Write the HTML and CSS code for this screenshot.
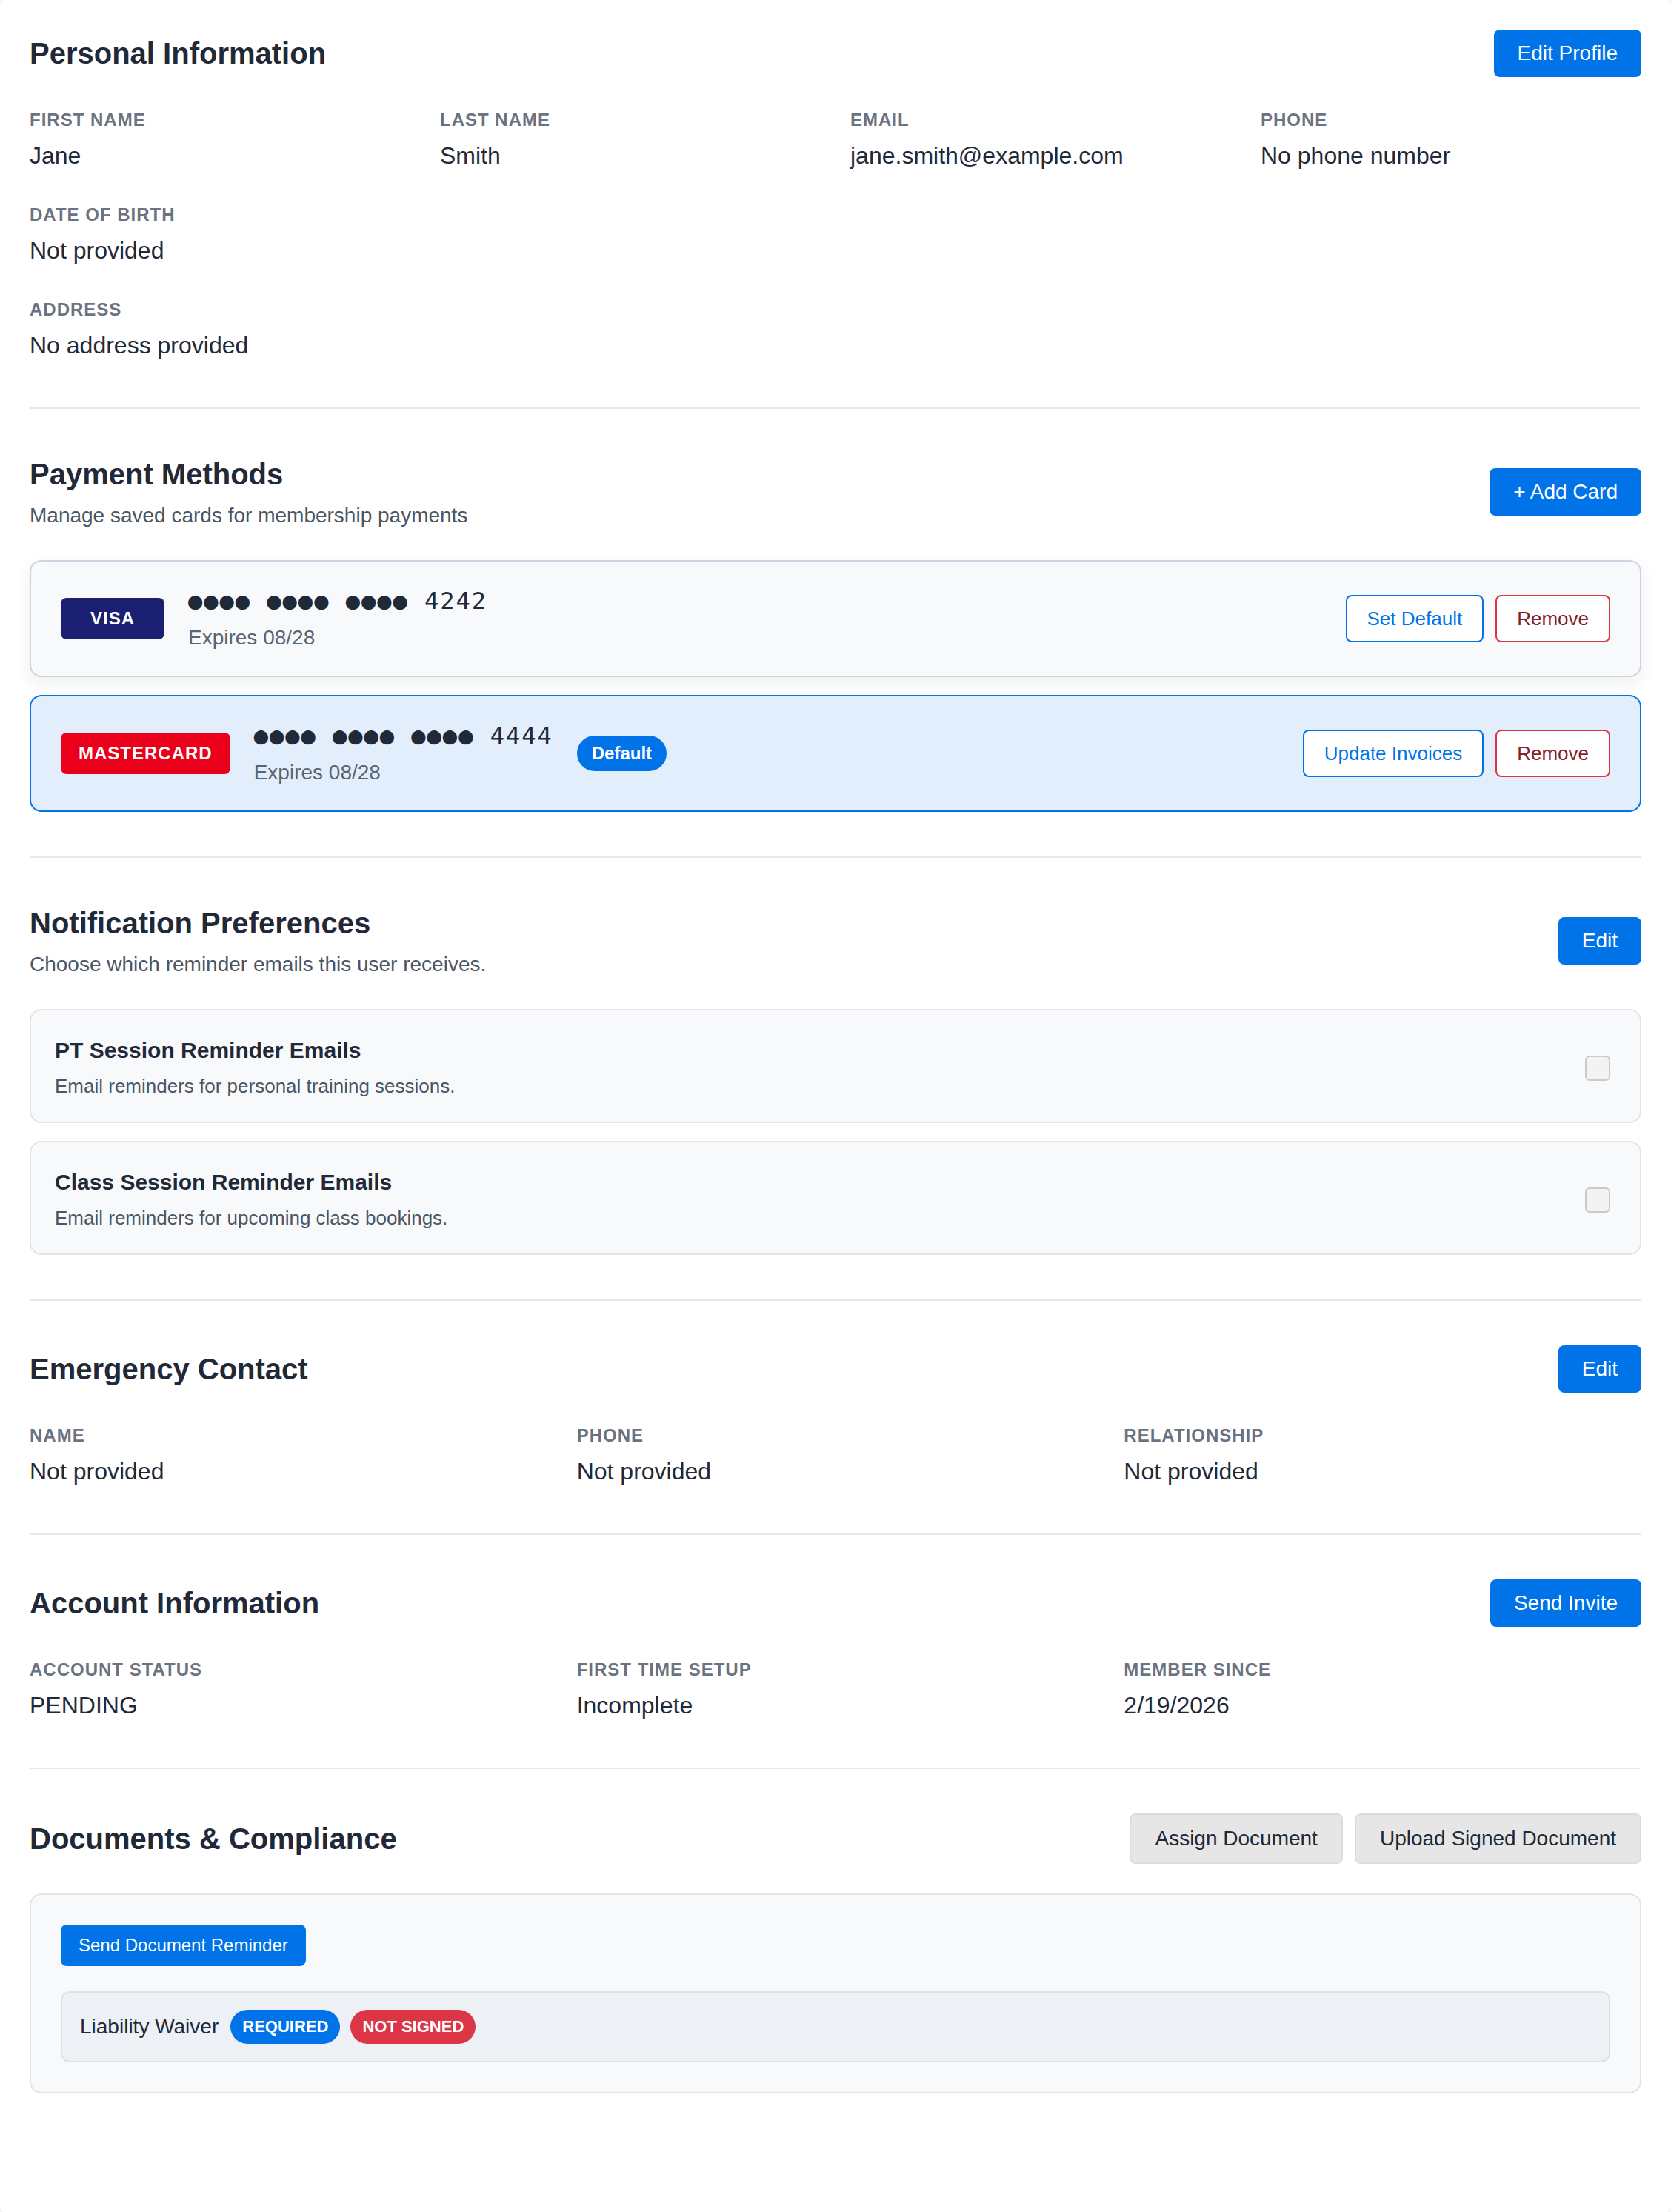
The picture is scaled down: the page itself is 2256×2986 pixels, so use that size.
FILE: index.html
```html
<!DOCTYPE html>
<html lang="en">
<head>
  <meta charset="UTF-8">
  <meta name="viewport" content="width=device-width, initial-scale=1.0">
  <title>Member Profile</title>
  <link rel="stylesheet" href="styles.css">
</head>
<body>
  <div class="profile">

    <section class="section">
      <div class="section-header">
        <h2>Personal Information</h2>
        <button class="btn btn-primary">Edit Profile</button>
      </div>
      <div class="fields fields-4">
        <div class="field">
          <div class="field-label">First Name</div>
          <div class="field-value">Jane</div>
        </div>
        <div class="field">
          <div class="field-label">Last Name</div>
          <div class="field-value">Smith</div>
        </div>
        <div class="field">
          <div class="field-label">Email</div>
          <div class="field-value">jane.smith@example.com</div>
        </div>
        <div class="field">
          <div class="field-label">Phone</div>
          <div class="field-value">No phone number</div>
        </div>
        <div class="field">
          <div class="field-label">Date of Birth</div>
          <div class="field-value">Not provided</div>
        </div>
        <div class="field field-wide">
          <div class="field-label">Address</div>
          <div class="field-value">No address provided</div>
        </div>
      </div>
    </section>

    <section class="section">
      <div class="section-header">
        <div>
          <h2>Payment Methods</h2>
          <p class="section-sub">Manage saved cards for membership payments</p>
        </div>
        <button class="btn btn-primary">+ Add Card</button>
      </div>
      <div class="card-list">
        <div class="pay-card pay-card-hover">
          <div class="pay-card-main">
            <span class="brand brand-visa">VISA</span>
            <div class="pay-card-info">
              <div class="card-number">●●●● ●●●● ●●●● 4242</div>
              <div class="card-expiry">Expires 08/28</div>
            </div>
          </div>
          <div class="pay-card-actions">
            <button class="btn-outline btn-outline-blue">Set Default</button>
            <button class="btn-outline btn-outline-red">Remove</button>
          </div>
        </div>
        <div class="pay-card pay-card-default">
          <div class="pay-card-main">
            <span class="brand brand-mc">MASTERCARD</span>
            <div class="pay-card-info">
              <div class="card-number">●●●● ●●●● ●●●● 4444</div>
              <div class="card-expiry">Expires 08/28</div>
            </div>
            <span class="pill">Default</span>
          </div>
          <div class="pay-card-actions">
            <button class="btn-outline btn-outline-blue">Update Invoices</button>
            <button class="btn-outline btn-outline-red">Remove</button>
          </div>
        </div>
      </div>
    </section>

    <section class="section">
      <div class="section-header">
        <div>
          <h2>Notification Preferences</h2>
          <p class="section-sub">Choose which reminder emails this user receives.</p>
        </div>
        <button class="btn btn-primary">Edit</button>
      </div>
      <div class="pref-list">
        <label class="pref">
          <div>
            <div class="pref-title">PT Session Reminder Emails</div>
            <div class="pref-desc">Email reminders for personal training sessions.</div>
          </div>
          <input type="checkbox" class="pref-check" disabled>
        </label>
        <label class="pref">
          <div>
            <div class="pref-title">Class Session Reminder Emails</div>
            <div class="pref-desc">Email reminders for upcoming class bookings.</div>
          </div>
          <input type="checkbox" class="pref-check" disabled>
        </label>
      </div>
    </section>

    <section class="section">
      <div class="section-header">
        <h2>Emergency Contact</h2>
        <button class="btn btn-primary">Edit</button>
      </div>
      <div class="fields fields-3">
        <div class="field">
          <div class="field-label">Name</div>
          <div class="field-value">Not provided</div>
        </div>
        <div class="field">
          <div class="field-label">Phone</div>
          <div class="field-value">Not provided</div>
        </div>
        <div class="field">
          <div class="field-label">Relationship</div>
          <div class="field-value">Not provided</div>
        </div>
      </div>
    </section>

    <section class="section">
      <div class="section-header">
        <h2>Account Information</h2>
        <button class="btn btn-primary">Send Invite</button>
      </div>
      <div class="fields fields-3">
        <div class="field">
          <div class="field-label">Account Status</div>
          <div class="field-value">PENDING</div>
        </div>
        <div class="field">
          <div class="field-label">First Time Setup</div>
          <div class="field-value">Incomplete</div>
        </div>
        <div class="field">
          <div class="field-label">Member Since</div>
          <div class="field-value">2/19/2026</div>
        </div>
      </div>
    </section>

    <section class="section">
      <div class="section-header">
        <h2>Documents &amp; Compliance</h2>
        <div class="header-actions">
          <button class="btn btn-light">Assign Document</button>
          <button class="btn btn-light">Upload Signed Document</button>
        </div>
      </div>
      <div class="doc-panel">
        <button class="btn-small">Send Document Reminder</button>
        <div class="doc-row">
          <span class="doc-name">Liability Waiver</span>
          <span class="tag tag-blue">REQUIRED</span>
          <span class="tag tag-red">NOT SIGNED</span>
        </div>
      </div>
    </section>

  </div>
</body>
</html>
```

FILE: styles.css
```css
* {
  box-sizing: border-box;
}

body {
  margin: 0;
  background: #f3f4f6;
  font-family: "Liberation Sans", Arial, Helvetica, sans-serif;
  color: #1f2937;
}

.profile {
  background: #fff;
  border-radius: 8px;
  padding: 40px;
  min-height: 100vh;
}

.section {
  padding: 60px 0;
  border-bottom: 2px solid #e5e7eb;
}

.section:first-child {
  padding-top: 0;
}

.section:last-child {
  border-bottom: none;
}

.section-header {
  display: flex;
  justify-content: space-between;
  align-items: center;
  margin-bottom: 40px;
}

h2 {
  margin: 0;
  font-size: 40px;
  line-height: 56px;
  font-weight: 700;
  color: #1f2937;
}

.section-sub {
  margin: 8px 0 0;
  font-size: 28px;
  line-height: 40px;
  color: #4b5563;
}

.header-actions {
  display: flex;
  gap: 16px;
}

/* buttons */
.btn {
  font-family: inherit;
  font-size: 28px;
  line-height: 32px;
  padding: 16px 32px;
  border-radius: 8px;
  border: none;
  cursor: pointer;
}

.btn-primary {
  background: #0073e8;
  color: #fff;
}

.btn-light {
  background: #e6e6e6;
  color: #1f2937;
  border: 2px solid #dcdcdc;
  padding: 16px 32px;
}

.btn-outline {
  font-family: inherit;
  font-size: 26px;
  line-height: 30px;
  padding: 15px 27px;
  background: #fff;
  border-radius: 8px;
  cursor: pointer;
}

.btn-outline-blue {
  border: 2px solid #0073e8;
  color: #0073e8;
}

.btn-outline-red {
  border: 2px solid #dc3545;
  color: #842029;
}

.btn-small {
  font-family: inherit;
  font-size: 24px;
  line-height: 28px;
  padding: 14px 24px;
  background: #0073e8;
  color: #fff;
  border: none;
  border-radius: 8px;
  cursor: pointer;
}

/* label / value grids */
.fields {
  display: grid;
  column-gap: 40px;
  row-gap: 42px;
  padding-top: 4px;
}

.fields-4 {
  grid-template-columns: repeat(4, 1fr);
}

.fields-3 {
  grid-template-columns: repeat(3, 1fr);
}

.field-wide {
  grid-column: 1 / -1;
}

.field-label {
  font-size: 24px;
  line-height: 28px;
  font-weight: 700;
  letter-spacing: 1px;
  text-transform: uppercase;
  color: #6b7280;
  margin-bottom: 10px;
}

.field-value {
  font-size: 32px;
  line-height: 48px;
  color: #1f2937;
}

/* payment cards */
.card-list {
  display: flex;
  flex-direction: column;
  gap: 24px;
}

.pay-card {
  display: flex;
  justify-content: space-between;
  align-items: center;
  padding: 33px 40px;
  border-radius: 16px;
  border: 2px solid #e5e7eb;
  background: #f8f9fa;
}

.pay-card-hover {
  border-color: #cbd5e1;
  box-shadow: 0 8px 24px rgba(15, 23, 42, 0.07);
}

.pay-card-default {
  background: #e3eefc;
  border-color: #0073e8;
}

.pay-card-main {
  display: flex;
  align-items: center;
  gap: 32px;
}

.brand {
  min-width: 140px;
  padding: 8px 24px;
  border-radius: 8px;
  color: #fff;
  font-size: 24px;
  line-height: 40px;
  font-weight: 700;
  letter-spacing: 1px;
  text-align: center;
}

.brand-visa {
  background: #1a1f71;
}

.brand-mc {
  background: #eb001b;
}

.card-number {
  font-family: "DejaVu Sans Mono", "Liberation Mono", monospace;
  font-size: 32px;
  line-height: 40px;
  letter-spacing: 2px;
  color: #1f2937;
}

.card-expiry {
  margin-top: 12px;
  font-size: 28px;
  line-height: 36px;
  color: #5b6472;
}

.pill {
  background: #0073e8;
  color: #fff;
  font-size: 24px;
  line-height: 28px;
  font-weight: 700;
  padding: 10px 20px;
  border-radius: 999px;
}

.pay-card-actions {
  display: flex;
  gap: 16px;
}

/* notification preferences */
.pref-list {
  display: flex;
  flex-direction: column;
  gap: 24px;
}

.pref {
  display: flex;
  justify-content: space-between;
  align-items: center;
  padding: 36px 32px 30px;
  background: #f8f9fa;
  border: 2px solid #e2e4e8;
  border-radius: 16px;
}

.pref-title {
  font-size: 30px;
  line-height: 36px;
  font-weight: 700;
  color: #1f2937;
}

.pref-desc {
  margin-top: 12px;
  font-size: 26px;
  line-height: 36px;
  color: #4b5563;
}

.pref-check {
  appearance: none;
  width: 34px;
  height: 34px;
  margin: 0 8px 0 0;
  border: 2px solid #cacaca;
  border-radius: 6px;
  background: #f3f3f3;
}

/* documents */
.doc-panel {
  padding: 40px;
  background: #f8f9fa;
  border: 2px solid #e2e4e8;
  border-radius: 16px;
}

.doc-row {
  display: flex;
  align-items: center;
  margin-top: 34px;
  padding: 23px 24px;
  background: #edf0f5;
  border: 2px solid #dde1e8;
  border-radius: 12px;
}

.doc-name {
  font-size: 28px;
  line-height: 44px;
  color: #1f2937;
  margin-right: 16px;
}

.tag {
  font-size: 22px;
  line-height: 26px;
  font-weight: 700;
  color: #fff;
  padding: 10px 16px;
  border-radius: 999px;
  margin-right: 14px;
}

.tag-blue {
  background: #0073e8;
}

.tag-red {
  background: #dc3545;
}
```
